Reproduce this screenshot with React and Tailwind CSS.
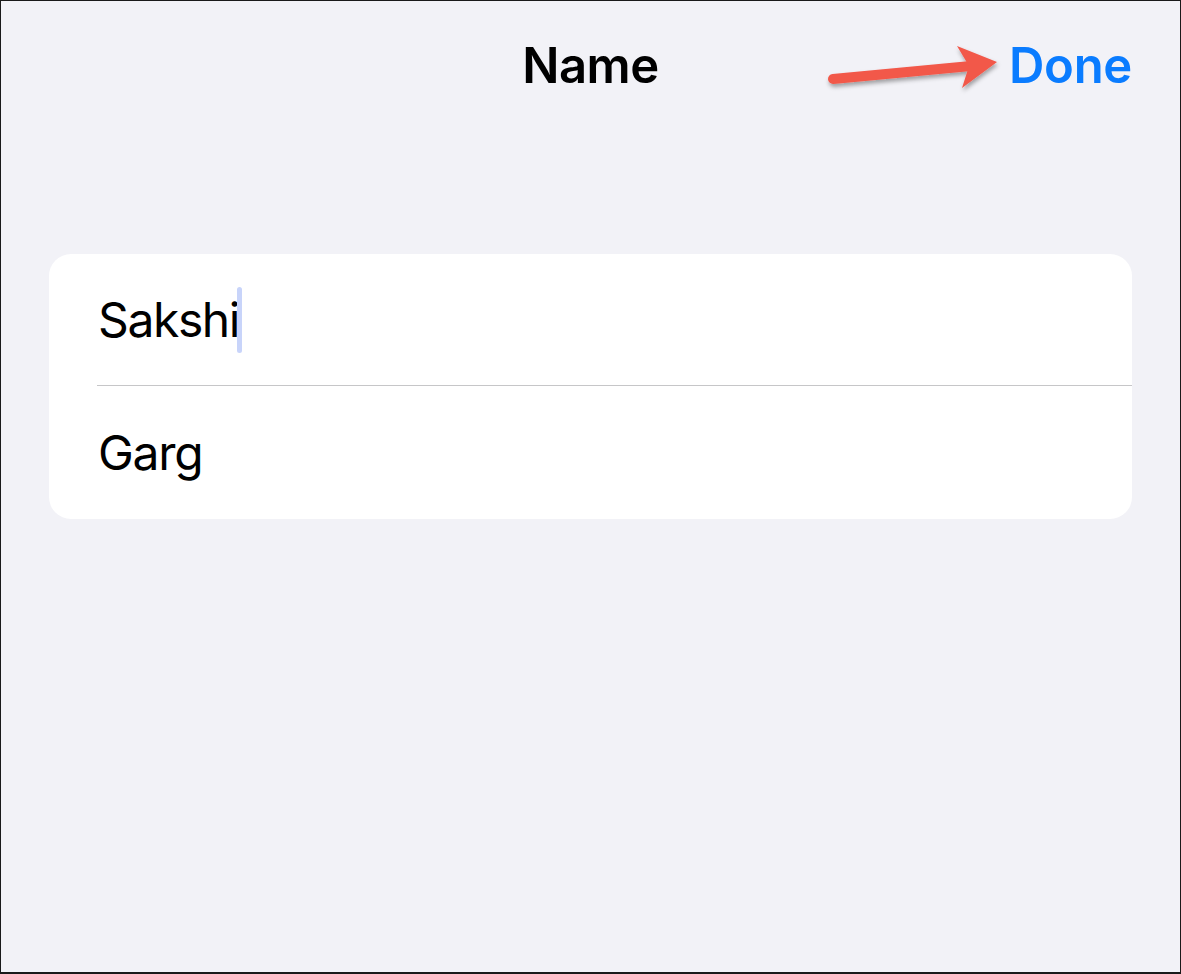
export default function App() {
  const font = { fontFamily: 'Inter, "Noto Sans", sans-serif' }
  return (
    <div
      className="w-[1181px] h-[974px] bg-[#f2f2f7] border border-[#1a1a1a] border-b-2 relative overflow-hidden"
      style={font}
    >
      <div className="h-[132px] relative flex items-start justify-center pt-[30px]">
        <h1 className="text-[49px] font-semibold text-black leading-[70px] tracking-[-0.5px]">Name</h1>
        <span className="absolute right-[48px] top-[30px] text-[49px] font-semibold text-[#0a7cff] leading-[70px] tracking-[-0.3px]">
          Done
        </span>
        <svg className="absolute left-[820px] top-[36px]" width="190" height="64" viewBox="0 0 190 64">
          <defs>
            <filter id="sh" x="-20%" y="-50%" width="140%" height="200%">
              <feDropShadow dx="1" dy="3" stdDeviation="2" floodColor="#000" floodOpacity="0.35" />
            </filter>
          </defs>
          <g filter="url(#sh)">
            <line x1="12" y1="42" x2="150" y2="29" stroke="#f2584a" strokeWidth="10" strokeLinecap="round" />
            <polygon points="136,9 176,25 141,51 148,29" fill="#f2584a" />
          </g>
        </svg>
      </div>
      <div className="pt-[121px] pl-[48px] pr-[48px]">
        <div className="bg-white rounded-[22px] overflow-hidden">
          <div className="h-[131px] pl-[49px] flex items-center">
            <span className="text-[48px] text-black leading-none tracking-[-1.4px]">Sakshi</span>
            <span className="ml-[-2px] w-[5px] h-[66px] rounded-full bg-[#c8d4fa]" />
          </div>
          <div className="ml-[48px] h-px bg-[#c6c6c8]" />
          <div className="h-[133px] pl-[49px] flex items-center">
            <span className="text-[48px] text-black leading-none tracking-[-1.3px]">Garg</span>
          </div>
        </div>
      </div>
    </div>
  )
}
